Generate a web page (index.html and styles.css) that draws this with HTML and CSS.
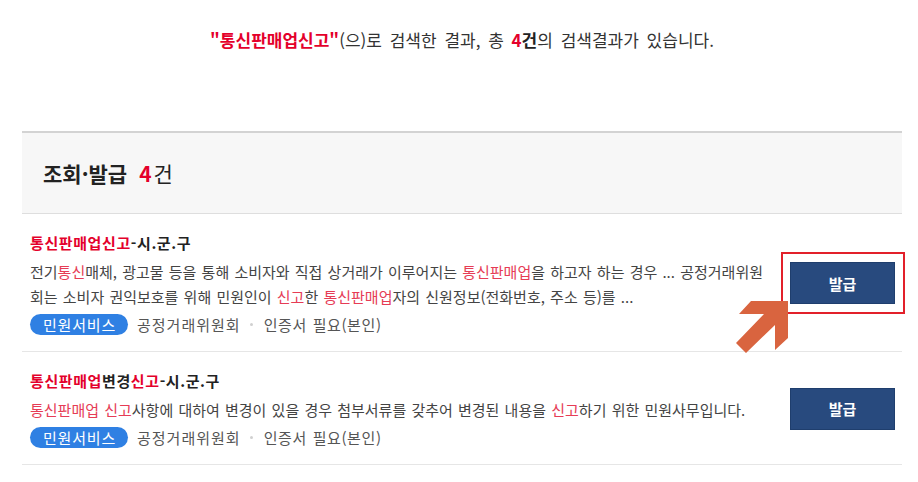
FILE: index.html
```html
<!DOCTYPE html>
<html lang="ko">
<head>
<meta charset="utf-8">
<title>검색결과</title>
<link rel="stylesheet" href="styles.css">
</head>
<body>
<div class="page">
  <p class="summary"><strong class="kw">"통신판매업신고"</strong>(으)로 검색한 결과, 총 <strong class="num">4</strong><strong class="unit">건</strong>의 검색결과가 있습니다.</p>

  <section class="result">
    <h2 class="result-head">조회·발급 <span class="count"><b>4</b>건</span></h2>
    <ul class="items">
      <li class="item">
        <div class="item-body">
          <h3 class="item-title"><em>통신판매업신고</em>-시.군.구</h3>
          <p class="item-desc">전기<em>통신</em>매체, 광고물 등을 통해 소비자와 직접 상거래가 이루어지는 <em>통신판매업</em>을 하고자 하는 경우 ... 공정거래위원회는 소비자 권익보호를 위해 민원인이 <em>신고</em>한 <em>통신판매업</em>자의 신원정보(전화번호, 주소 등)를 ...</p>
          <div class="item-meta"><span class="pill">민원서비스</span><span class="org">공정거래위원회</span><span class="sep"></span><span class="cert">인증서 필요(본인)</span></div>
        </div>
        <div class="item-action">
          <button class="btn" type="button">발급</button>
          <span class="focus-box"></span>
          <svg class="pointer" width="54" height="54" viewBox="0 0 54 54"><polygon points="53,1 16,1 4,14 29,14 1,43 11,53 40,25 40,50 53,38" fill="#d9643f"/></svg>
        </div>
      </li>
      <li class="item">
        <div class="item-body">
          <h3 class="item-title"><em>통신판매업</em>변경<em>신고</em>-시.군.구</h3>
          <p class="item-desc"><em>통신판매업 신고</em>사항에 대하여 변경이 있을 경우 첨부서류를 갖추어 변경된 내용을 <em>신고</em>하기 위한 민원사무입니다.</p>
          <div class="item-meta"><span class="pill">민원서비스</span><span class="org">공정거래위원회</span><span class="sep"></span><span class="cert">인증서 필요(본인)</span></div>
        </div>
        <div class="item-action">
          <button class="btn" type="button">발급</button>
        </div>
      </li>
    </ul>
  </section>
</div>
</body>
</html>
```

FILE: styles.css
```css
* { box-sizing: border-box; }
html, body { margin: 0; padding: 0; background: #fff; }
body {
  font-family: "Noto Sans CJK KR", "Noto Sans", "Liberation Sans", sans-serif;
  color: #333;
}
.page {
  width: 880px;
  margin-left: 22px;
}
.summary {
  margin: 0;
  padding-top: 27px;
  font-size: 17px;
  line-height: 26px;
  text-align: center;
  color: #333;
  word-spacing: 3px;
}
.summary .kw, .summary .num { color: #e4002b; font-weight: 700; }
.summary .unit { color: #222; font-weight: 700; }

.result { margin-top: 78px; }
.result-head {
  margin: 0;
  background: #f7f7f7;
  border-top: 2px solid #d3d3d3;
  border-bottom: 1px solid #dedede;
  height: 83px;
  padding: 0 21px;
  display: flex;
  align-items: center;
  font-size: 21px;
  font-weight: 700;
  color: #222;
}
.result-head .count { margin-left: 12px; font-weight: 400; color: #222; }
.result-head .count b { color: #e4002b; font-weight: 700; margin-right: 2px; }

.items { list-style: none; margin: 0; padding: 0; }
.item {
  display: flex;
  align-items: center;
  gap: 22px;
  padding: 17px 7px 16px 8px;
  border-bottom: 1px solid #e6e6e6;
}
.item-body { flex: 1; min-width: 0; }
.item-title {
  margin: 0;
  font-size: 15px;
  line-height: 24px;
  font-weight: 700;
  color: #222;
  letter-spacing: 0.6px;
}
.item-title em { font-style: normal; color: #e4002b; }
.item-desc {
  margin: 4px 0 0;
  font-size: 15px;
  line-height: 25px;
  color: #444;
  word-spacing: 1px;
}
.item-desc em { font-style: normal; color: #e63c55; }
.item-meta {
  margin-top: 5px;
  display: flex;
  align-items: center;
  font-size: 15px;
  line-height: 21px;
  color: #555;
  word-spacing: 1px;
}
.pill {
  display: inline-block;
  height: 21px;
  padding: 0 12px 0 13px;
  border-radius: 11px;
  background: #2f80e3;
  color: #fff;
  line-height: 21px;
  margin-right: 9px;
  letter-spacing: 0.8px;
}
.org { letter-spacing: 1px; }
.cert { letter-spacing: 0.6px; }
.sep {
  width: 3px;
  height: 3px;
  border-radius: 50%;
  background: #d0d0d0;
  margin: 0 11px 0 9px;
}
.item-action {
  position: relative;
  flex: none;
  width: 105px;
}
.btn {
  display: block;
  width: 105px;
  height: 42px;
  background: #284a7e;
  border: 1px solid #1f3e6d;
  color: #fff;
  font-family: inherit;
  font-size: 15px;
  font-weight: 700;
  padding: 0;
  cursor: pointer;
}
.focus-box {
  position: absolute;
  left: -9px;
  right: -10px;
  top: -10px;
  bottom: -10px;
  border: 2px solid #e2202a;
  pointer-events: none;
}
.pointer {
  position: absolute;
  left: -55px;
  top: 38px;
  overflow: visible;
}
```
